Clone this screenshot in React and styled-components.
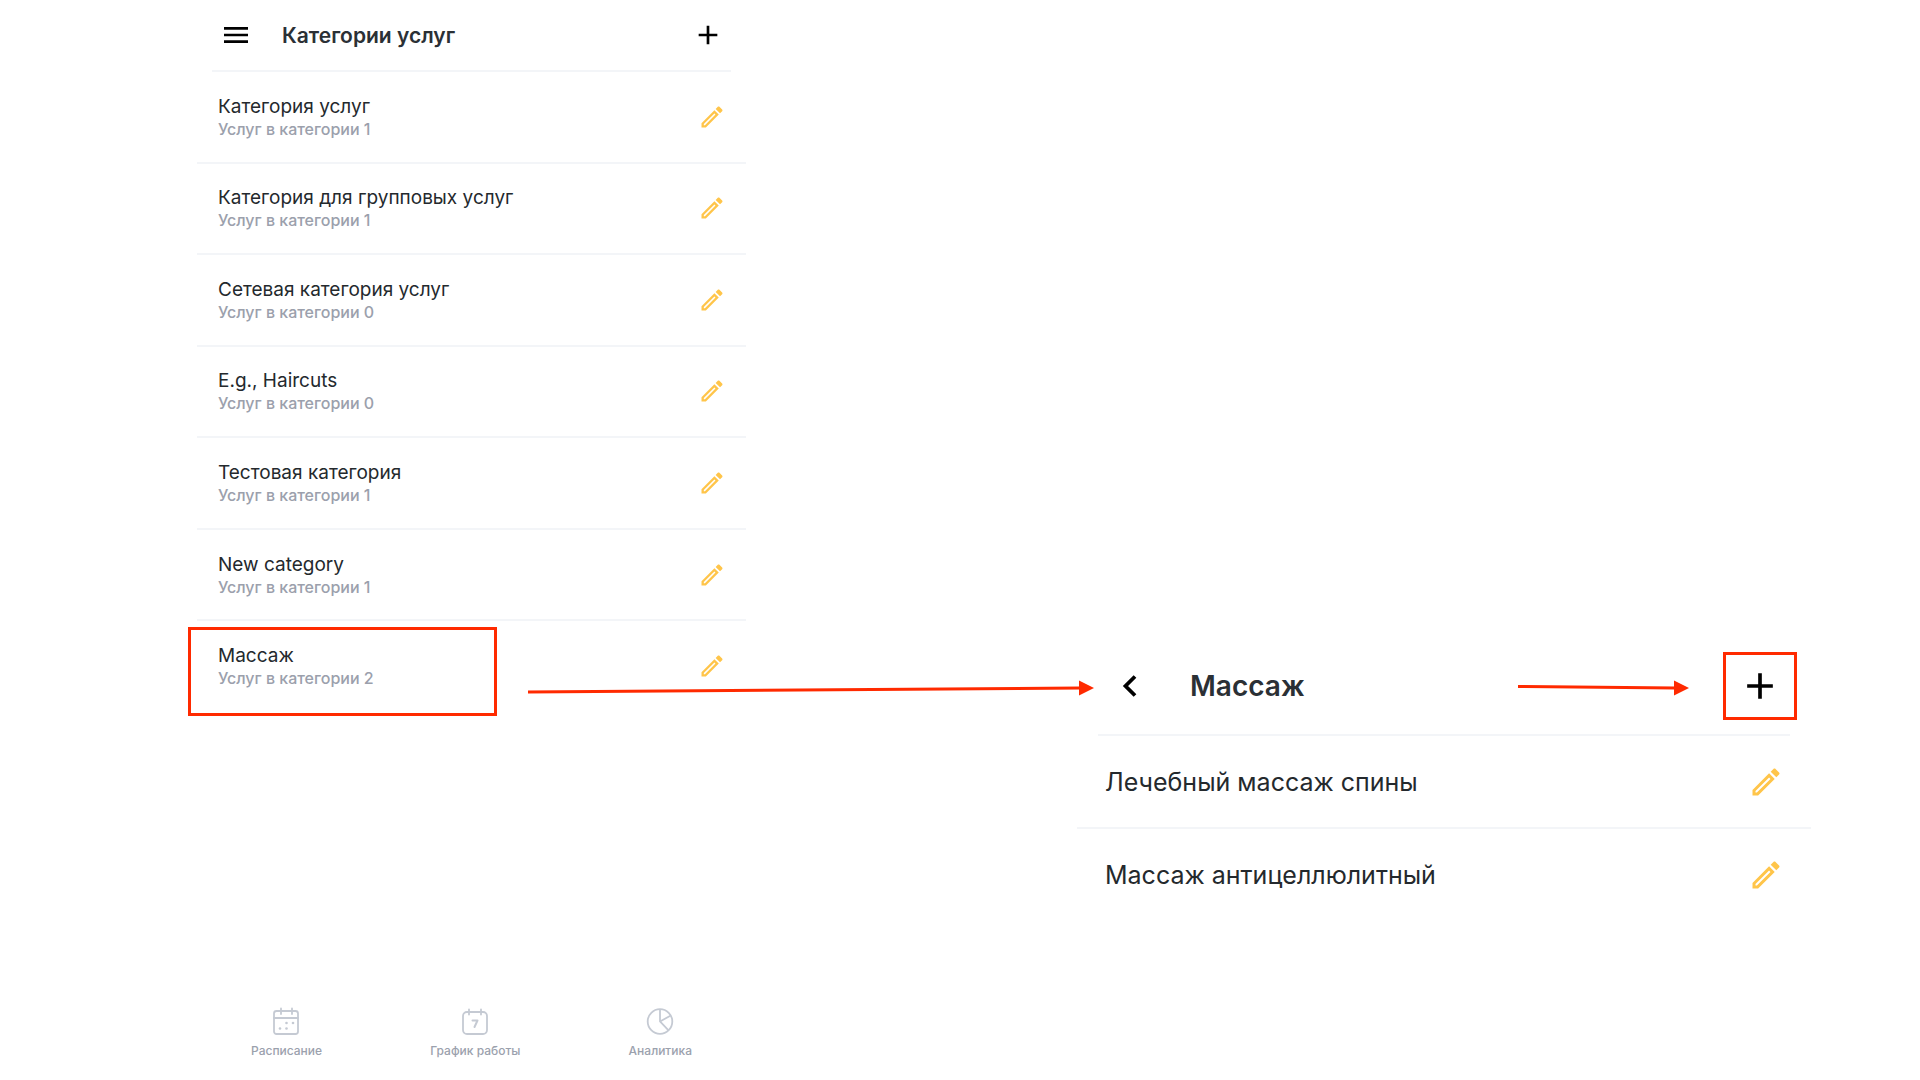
import React from 'react';
import styled, { createGlobalStyle } from 'styled-components';

const GlobalStyle = createGlobalStyle`
  * {
    box-sizing: border-box;
  }

  body {
    margin: 0;
    background-color: #ffffff;
    color: #24292d;
    font-family: Inter, 'Liberation Sans', sans-serif;
  }
`;

const Page = styled.main`
  display: grid;
  grid-template-columns: 197fr 549fr 331fr 734fr 109fr;
  min-height: 100vh;
  overflow: hidden;
`;

const CategoriesPanel = styled.section`
  grid-column: 2;
  display: flex;
  flex-direction: column;
`;

const ServicesPanel = styled.section`
  grid-column: 4;
  padding-top: 638px;
`;

const Header = styled.header`
  position: relative;
  display: flex;
  align-items: center;
  height: ${({ $large }) => ($large ? '98px' : '72px')};
  margin: ${({ $large }) => ($large ? '0 21px' : '0 15px')};
  padding: ${({ $large }) => ($large ? '0 8px 0 9px' : '0 7px 0 8px')};
  border-bottom: 2px solid #f3f5f8;
`;

const Title = styled.h1`
  flex: 1;
  margin: 0 0 0 ${({ $large }) => ($large ? '39px' : '30px')};
  color: #2b3035;
  font-size: ${({ $large }) => ($large ? '28px' : '21px')};
  font-weight: 600;
  line-height: 1;
`;

const IconButton = styled.button`
  position: relative;
  display: flex;
  padding: 0;
  border: none;
  background: none;
  color: ${({ $accent }) => ($accent ? '#ffc54a' : '#000000')};
  cursor: pointer;
`;

const CategoryList = styled.ul`
  display: grid;
  grid-template-rows: repeat(7, 1fr);
  min-height: 641px;
  margin: 0;
  padding: 0;
  list-style: none;
`;

const ServiceList = styled.ul`
  margin: 0;
  padding: 0;
  list-style: none;
`;

const Row = styled.li`
  position: relative;
  display: flex;
  align-items: center;
  justify-content: space-between;
  min-height: ${({ $large }) => ($large ? '93px' : '0')};
  padding: ${({ $large }) => ($large ? '0 27px 0 28px' : '0 20px 0 21px')};
  border-bottom: 2px solid #f3f5f8;

  &:last-child {
    border-bottom-color: transparent;
  }
`;

const CategoryName = styled.h2`
  margin: 0;
  font-size: 19px;
  font-weight: 400;
  line-height: 25px;
`;

const CategoryCount = styled.p`
  margin: 0;
  color: #9ba0ac;
  font-size: 16px;
  font-weight: 500;
  line-height: 21px;
`;

const ServiceName = styled.h2`
  margin: 0;
  font-size: 25px;
  font-weight: 400;
  line-height: 30px;
`;

const TabBar = styled.nav`
  display: flex;
  justify-content: space-between;
  margin-top: auto;
  padding: 0 54px 21px;
`;

const Tab = styled.a`
  display: flex;
  flex-direction: column;
  align-items: center;
  gap: 8px;
  color: #9ba1ad;
  font-size: 12px;
  font-weight: 500;
  line-height: 16px;
  text-decoration: none;

  svg {
    color: #c5cad3;
  }
`;

const RowHighlight = styled.span`
  position: absolute;
  top: 6px;
  left: -9px;
  width: 309px;
  height: 89px;
  border: 3px solid #ff2a00;
  pointer-events: none;
`;

const ButtonHighlight = styled.span`
  position: absolute;
  inset: -12px -15px;
  border: 3px solid #ff2a00;
  pointer-events: none;
`;

const Arrow = styled.svg`
  position: absolute;
  top: 38px;
  ${({ $side }) => ($side === 'left' ? 'right: calc(100% + 4px);' : 'right: 101px;')}
  pointer-events: none;
`;

const categories = [
  { name: 'Категория услуг', count: 1 },
  { name: 'Категория для групповых услуг', count: 1 },
  { name: 'Сетевая категория услуг', count: 0 },
  { name: 'E.g., Haircuts', count: 0 },
  { name: 'Тестовая категория', count: 1 },
  { name: 'New category', count: 1 },
  { name: 'Массаж', count: 2, highlighted: true },
];

const services = ['Лечебный массаж спины', 'Массаж антицеллюлитный'];

const MenuIcon = () => (
  <svg width="32" height="32" viewBox="0 0 24 24" fill="currentColor">
    <path d="M3 18h18v-2H3v2zm0-5h18v-2H3v2zm0-7v2h18V6H3z" />
  </svg>
);

const PlusIcon = ({ size }) => (
  <svg width={size} height={size} viewBox="0 0 24 24" fill="currentColor">
    <path d="M19 13h-6v6h-2v-6H5v-2h6V5h2v6h6v2z" />
  </svg>
);

const BackIcon = () => (
  <svg width="44" height="44" viewBox="0 0 44 44" fill="none" stroke="currentColor" strokeWidth="3.8">
    <path d="M28 12.5 18.5 22 28 31.5" />
  </svg>
);

const PencilIcon = ({ size }) => (
  <svg width={size} height={size} viewBox="0 0 24 24" fill="currentColor">
    <path d="M14.06 9.02l.92.92L5.92 19H5v-.92l9.06-9.06M17.66 3c-.25 0-.51.1-.7.29l-1.83 1.83 3.75 3.75 1.83-1.83c.39-.39.39-1.02 0-1.41l-2.34-2.34c-.2-.2-.45-.29-.71-.29zm-3.6 3.19L3 17.25V21h3.75L17.81 9.94l-3.75-3.75z" />
  </svg>
);

const ScheduleIcon = () => (
  <svg width="28" height="28" viewBox="0 0 28 28" fill="none" stroke="currentColor" strokeWidth="1.8" strokeLinecap="round">
    <rect x="1" y="4" width="24" height="23" rx="2.5" />
    <path d="M1 11h24M8 1.5V7M19 1.5V7" />
    <g fill="currentColor" stroke="none">
      <circle cx="13.5" cy="16" r="1.3" />
      <circle cx="20" cy="16" r="1.3" />
      <circle cx="7" cy="21.5" r="1.3" />
      <circle cx="13.5" cy="21.5" r="1.3" />
    </g>
  </svg>
);

const WorkHoursIcon = () => (
  <svg width="28" height="28" viewBox="0 0 28 28" fill="none" stroke="currentColor" strokeWidth="1.8" strokeLinecap="round">
    <rect x="2" y="5" width="24" height="22" rx="4" />
    <path d="M8 2.5v5M20 2.5v5" />
    <path d="M11.5 13.5h5l-3 6.5" strokeWidth="2" strokeLinejoin="round" />
  </svg>
);

const AnalyticsIcon = () => (
  <svg width="28" height="28" viewBox="0 0 28 28" fill="none" stroke="currentColor" strokeWidth="1.8">
    <circle cx="14" cy="14.5" r="12.3" />
    <path d="M14 2.2v12.3l8.5 8.8M14 14.5l10.8-6" />
  </svg>
);

const tabs = [
  { label: 'Расписание', Icon: ScheduleIcon },
  { label: 'График работы', Icon: WorkHoursIcon },
  { label: 'Аналитика', Icon: AnalyticsIcon },
];

const App = () => (
  <>
    <GlobalStyle />
    <Page>
      <CategoriesPanel>
        <Header>
          <IconButton aria-label="Меню">
            <MenuIcon />
          </IconButton>
          <Title>Категории услуг</Title>
          <IconButton aria-label="Добавить категорию">
            <PlusIcon size={32} />
          </IconButton>
        </Header>
        <CategoryList>
          {categories.map(({ name, count, highlighted }) => (
            <Row key={name}>
              <div>
                <CategoryName>{name}</CategoryName>
                <CategoryCount>Услуг в категории {count}</CategoryCount>
              </div>
              <IconButton $accent aria-label={`Редактировать: ${name}`}>
                <PencilIcon size={28} />
              </IconButton>
              {highlighted && <RowHighlight />}
            </Row>
          ))}
        </CategoryList>
        <TabBar>
          {tabs.map(({ label, Icon }) => (
            <Tab key={label} href="#">
              <Icon />
              {label}
            </Tab>
          ))}
        </TabBar>
      </CategoriesPanel>

      <ServicesPanel>
        <Header $large>
          <Arrow $side="left" width="566" height="20" viewBox="0 0 566 20">
            <path d="M0 16 552 12" stroke="#ff2a00" strokeWidth="3" />
            <path d="M551 4.500v15l15-7.500z" fill="#ff2a00" />
          </Arrow>
          <IconButton aria-label="Назад">
            <BackIcon />
          </IconButton>
          <Title $large>Массаж</Title>
          <Arrow width="171" height="20" viewBox="0 0 171 20">
            <path d="M0 10.500 157 12" stroke="#ff2a00" strokeWidth="3" />
            <path d="M156 4.500v15l15-7.500z" fill="#ff2a00" />
          </Arrow>
          <IconButton aria-label="Добавить услугу">
            <PlusIcon size={44} />
            <ButtonHighlight />
          </IconButton>
        </Header>
        <ServiceList>
          {services.map((name) => (
            <Row key={name} $large>
              <ServiceName>{name}</ServiceName>
              <IconButton $accent aria-label={`Редактировать: ${name}`}>
                <PencilIcon size={36} />
              </IconButton>
            </Row>
          ))}
        </ServiceList>
      </ServicesPanel>
    </Page>
  </>
);

export default App;
